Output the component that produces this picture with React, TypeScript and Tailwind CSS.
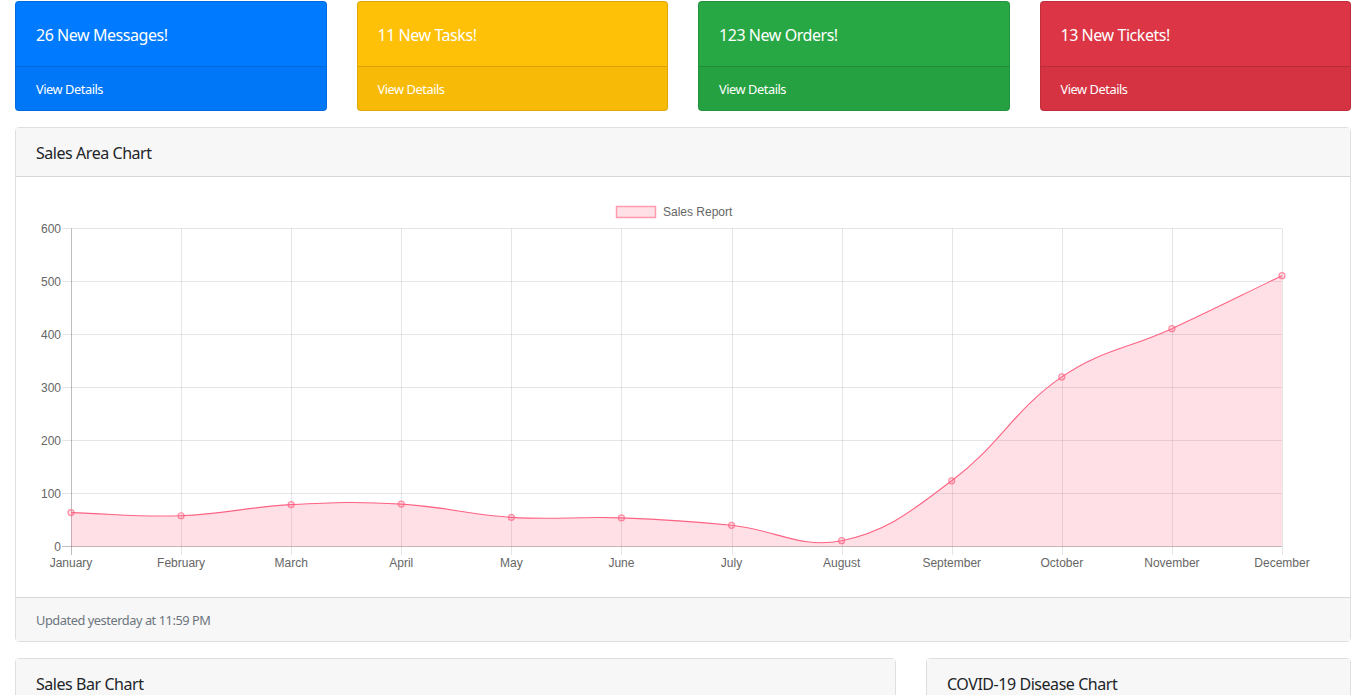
import React from "react";

const months = ["January","February","March","April","May","June","July","August","September","October","November","December"];
const data = [64, 58, 79, 80, 55, 54, 40, 11, 124, 320, 411, 511];

const px = (i: number) => 35 + (i * 1211) / 11;
const py = (v: number) => 349.5 - v * 0.53;

function splinePath(pts: { x: number; y: number }[], t = 0.4) {
  const cps = pts.map((cur, i) => {
    const prev = pts[i - 1] || cur;
    const next = pts[i + 1] || cur;
    const d01 = Math.hypot(cur.x - prev.x, cur.y - prev.y);
    const d12 = Math.hypot(next.x - cur.x, next.y - cur.y);
    let s01 = d01 / (d01 + d12);
    let s12 = d12 / (d01 + d12);
    if (isNaN(s01)) s01 = 0;
    if (isNaN(s12)) s12 = 0;
    const fa = t * s01;
    const fb = t * s12;
    return {
      px: cur.x - fa * (next.x - prev.x),
      py: cur.y - fa * (next.y - prev.y),
      nx: cur.x + fb * (next.x - prev.x),
      ny: cur.y + fb * (next.y - prev.y),
    };
  });
  let d = `M ${pts[0].x} ${pts[0].y}`;
  for (let i = 1; i < pts.length; i++) {
    d += ` C ${cps[i - 1].nx} ${cps[i - 1].ny} ${cps[i].px} ${cps[i].py} ${pts[i].x} ${pts[i].y}`;
  }
  return d;
}

function AreaChart() {
  const pts = data.map((v, i) => ({ x: px(i), y: py(v) }));
  const line = splinePath(pts);
  const area = `${line} L ${px(11)} ${py(0)} L ${px(0)} ${py(0)} Z`;
  const font = "'Liberation Sans', Arial, sans-serif";
  return (
    <svg width="1294" height="380" viewBox="0 0 1294 380" className="block w-full tracking-normal">
      <rect x="580.5" y="9.5" width="39" height="11" fill="rgba(255,99,132,0.2)" stroke="#ff6384" strokeOpacity="0.6" strokeWidth="1.5" />
      <text x="627" y="19" fontSize="12" fill="#666" fontFamily={font}>Sales Report</text>
      {[0, 100, 200, 300, 400, 500, 600].map((v) => (
        <g key={v}>
          <line x1="26" x2="1246" y1={py(v)} y2={py(v)} stroke={v === 0 ? "rgba(0,0,0,0.25)" : "rgba(0,0,0,0.1)"} strokeWidth="1" />
          <text x="25" y={py(v) + 4} fontSize="12" fill="#666" textAnchor="end" fontFamily={font}>{v}</text>
        </g>
      ))}
      {months.map((m, i) => {
        const x = Math.round(px(i)) + 0.5;
        return (
          <g key={m}>
            <line x1={x} x2={x} y1="31.5" y2="358" stroke={i === 0 ? "rgba(0,0,0,0.25)" : "rgba(0,0,0,0.1)"} strokeWidth="1" />
            <text x={px(i)} y="370" fontSize="12" fill="#666" textAnchor="middle" fontFamily={font}>{m}</text>
          </g>
        );
      })}
      <path d={area} fill="rgba(255,99,132,0.2)" />
      <path d={line} fill="none" stroke="#ff6384" strokeWidth="1.1" />
      {pts.map((p, i) => (
        <circle key={i} cx={p.x} cy={p.y} r="3" fill="rgba(255,99,132,0.2)" stroke="rgba(255,99,132,0.7)" strokeWidth="1.2" />
      ))}
    </svg>
  );
}

const cards = [
  { text: "26 New Messages!", bg: "bg-[#007bff]" },
  { text: "11 New Tasks!", bg: "bg-[#ffc107]" },
  { text: "123 New Orders!", bg: "bg-[#28a745]" },
  { text: "13 New Tickets!", bg: "bg-[#dc3545]" },
];

export default function App() {
  return (
    <div className="min-h-screen bg-white px-[15px] pt-px font-['Noto_Sans',sans-serif] tracking-[-0.028em] text-[#212529]">
      <div className="grid grid-cols-4 gap-[30px]">
        {cards.map((c) => (
          <div key={c.text} className={`${c.bg} rounded-[4px] border border-black/[0.125] text-white`}>
            <div className="px-5 pt-[20.5px] pb-[19.5px] text-base leading-6">{c.text}</div>
            <div className="border-t border-black/[0.125] bg-black/[0.03] px-5 pt-[13px] pb-[11px] text-[12.8px] leading-[19px]">View Details</div>
          </div>
        ))}
      </div>

      <div className="mt-4 rounded-[4px] border border-black/[0.125]">
        <div className="border-b border-black/[0.125] bg-[#f7f7f7] px-5 pt-[12.5px] pb-[11.5px] text-base leading-6">Sales Area Chart</div>
        <div className="p-5">
          <AreaChart />
        </div>
        <div className="border-t border-black/[0.125] bg-[#f7f7f7] px-5 pt-[13px] pb-[11px] text-[12.8px] leading-[19px] text-[#6c757d]">
          Updated yesterday at 11:59 PM
        </div>
      </div>

      <div className="mt-4 grid grid-cols-[1fr_425px] gap-[30px]">
        <div className="rounded-t-[4px] border border-black/[0.125]">
          <div className="bg-[#f7f7f7] px-5 pt-[12.5px] pb-[11.5px] text-base leading-6">Sales Bar Chart</div>
          <div className="h-24" />
        </div>
        <div className="rounded-t-[4px] border border-black/[0.125]">
          <div className="bg-[#f7f7f7] px-5 pt-[12.5px] pb-[11.5px] text-base leading-6">COVID-19 Disease Chart</div>
          <div className="h-24" />
        </div>
      </div>
    </div>
  );
}
